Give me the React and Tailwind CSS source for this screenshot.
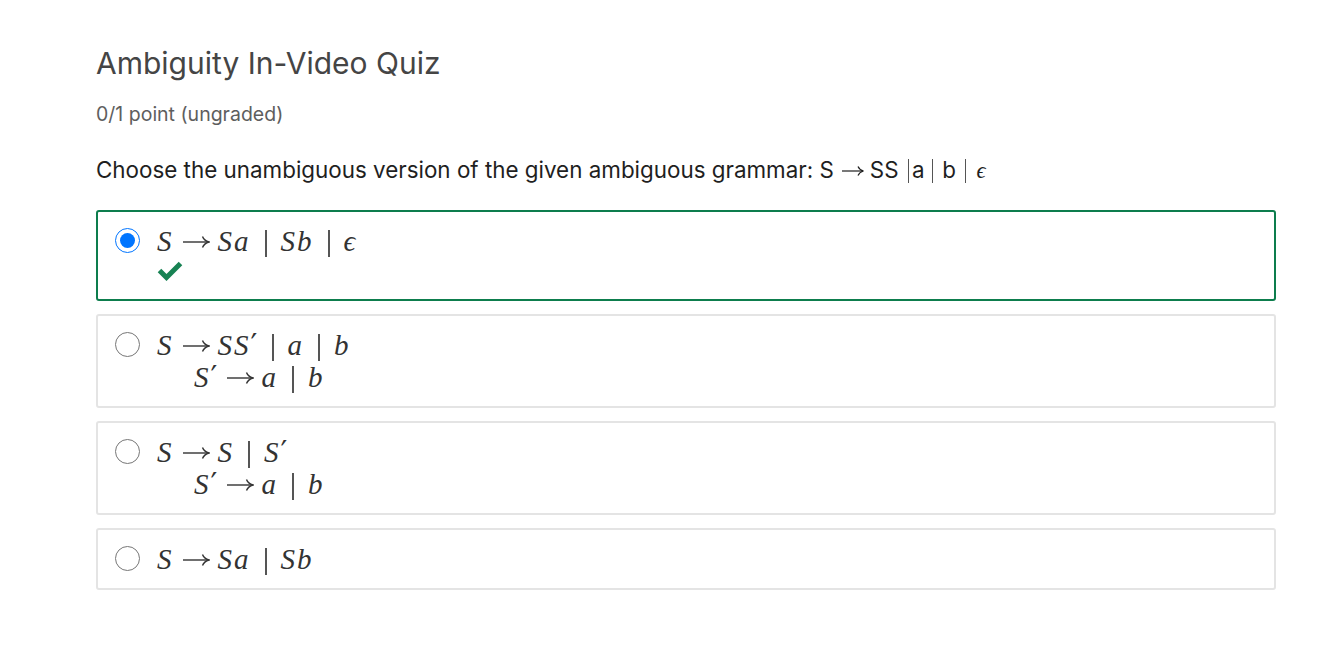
import React from 'react';

const Arrow = ({ l = 8, r = 8 }) => (
  <svg
    width="28"
    height="14"
    viewBox="0 0 28 14"
    className="inline-block align-[2px]"
    style={{ marginLeft: l, marginRight: r }}
  >
    <path d="M1 7 H26.5" stroke="#333" strokeWidth="1.4" fill="none" />
    <path d="M20.5 1.5 Q22 5.5 27 7 Q22 8.5 20.5 12.5" stroke="#333" strokeWidth="1.4" fill="none" />
  </svg>
);
const Bar = () => <span className="mx-[14px] inline-block w-[2px] h-[27px] bg-[#555] align-[-6px]" />;
const Prime = () => (
  <span className="relative inline-block w-[7px] h-[1px]">
    <span className="absolute left-[0px] top-[-24px] not-italic leading-none text-[30px] font-['DejaVu_Serif',serif]">′</span>
  </span>
);
const I = ({ children }) => <span className="italic tracking-[2px]">{children}</span>;

const Opt = ({ checked, correct, lines }) => (
  <div
    className={`rounded-[3px] border-2 pl-[17px] pr-4 pt-[14px] pb-[13px] ${correct ? 'border-[#0d7d4d]' : 'border-[#e4e4e4]'}`}
  >
    <div className="flex items-start gap-[17px]">
      <input
        type="radio"
        checked={checked}
        readOnly
        className="m-0 mt-[2px] w-[25px] h-[25px] shrink-0"
      />
      <div className="font-['Liberation_Serif',serif] text-[29px] text-[#333] leading-[31px]">
        {lines.map((l, i) => (
          <div key={i} className={i > 0 ? 'pl-[37px] mt-[1px]' : ''}>{l}</div>
        ))}
        {correct && (
          <svg width="26" height="21" viewBox="0 0 26 21" className="mt-[3px] mb-[5px]">
            <path d="M2.5 10.5 L9.5 17.5 L23.5 3.5" stroke="#178253" strokeWidth="5" fill="none" />
          </svg>
        )}
      </div>
    </div>
  </div>
);

const QBar = ({ className }) => (
  <span className={`inline-block w-[1.5px] h-[24px] bg-[#555] align-[-5px] ${className}`} />
);

export default function App() {
  return (
    <div className="min-h-screen bg-white font-['Inter',sans-serif]">
      <div className="pl-[96px] pr-[51px] pt-[43px]">
        <h1 className="text-[30px] text-[#454545] leading-[40px]">Ambiguity In-Video Quiz</h1>
        <p className="mt-[19px] text-[19.5px] text-[#5e5e5e] leading-[24px]">0/1 point (ungraded)</p>
        <p className="mt-[30px] text-[22.4px] text-[#1f1f1f] leading-[28px]">
          Choose the unambiguous version of the given ambiguous grammar: S
          <svg width="22" height="12" viewBox="0 0 22 12" className="inline-block align-[1px] ml-[8px] mr-[6px]">
            <path d="M0 6 H21" stroke="#1f1f1f" strokeWidth="1.2" fill="none" />
            <path d="M16 1.5 Q17.5 5 21.5 6 Q17.5 7 16 10.5" stroke="#1f1f1f" strokeWidth="1.2" fill="none" />
          </svg>
          SS
          <QBar className="ml-[9px] mr-[3px]" />a
          <QBar className="ml-[7px] mr-[9px]" />b
          <QBar className="ml-[9px] mr-[10px]" />
          <span className="font-['Liberation_Serif',serif] italic">ϵ</span>
        </p>
        <div className="mt-[25px] flex flex-col gap-[13px]">
          <Opt
            checked
            correct
            lines={[
              <span><I>S</I><Arrow /><I>Sa</I><Bar /><I>Sb</I><Bar /><I>ϵ</I></span>,
            ]}
          />
          <Opt
            lines={[
              <span><I>S</I><Arrow /><I>SS</I><Prime /><Bar /><I>a</I><Bar /><I>b</I></span>,
              <span><I>S</I><Prime /><Arrow /><I>a</I><Bar /><I>b</I></span>,
            ]}
          />
          <Opt
            lines={[
              <span><I>S</I><Arrow /><I>S</I><Bar /><I>S</I><Prime /></span>,
              <span><I>S</I><Prime /><Arrow /><I>a</I><Bar /><I>b</I></span>,
            ]}
          />
          <Opt
            lines={[
              <span><I>S</I><Arrow /><I>Sa</I><Bar /><I>Sb</I></span>,
            ]}
          />
        </div>
      </div>
    </div>
  );
}
